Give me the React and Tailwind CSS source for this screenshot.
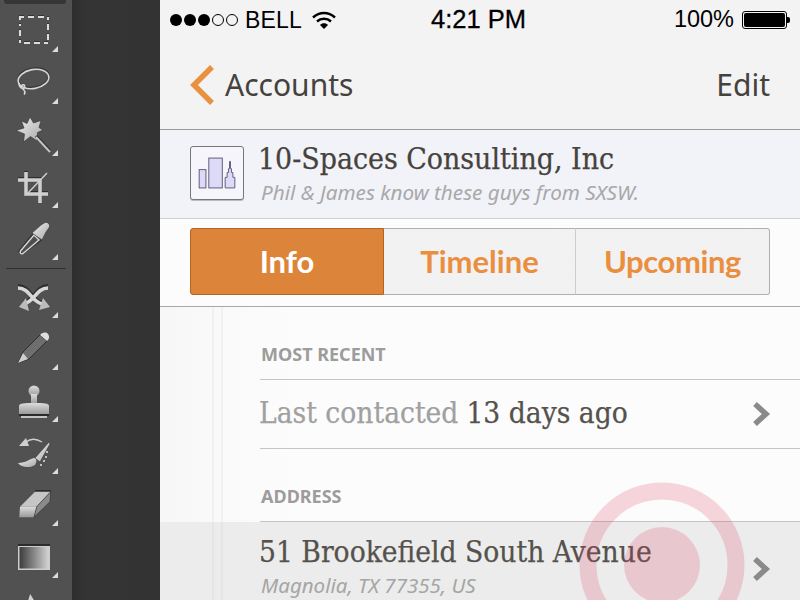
import React from 'react';

const sans = "font-['Liberation_Sans',Arial,sans-serif]";
const slab = "font-['DejaVu_Serif',serif] [font-stretch:condensed] [-webkit-text-stroke:0.25px_currentColor]";
const pt = "font-['Noto_Sans',sans-serif]";
const ptBold = "font-['Lato',sans-serif]";

function Corner() {
  return (
    <svg className="absolute right-[14px] bottom-0" width="6" height="6" viewBox="0 0 6 6">
      <polygon points="6,0 6,6 0,6" fill="#dcdcdc" />
    </svg>
  );
}

function Icon({ children }) {
  return (
    <svg width="36" height="36" viewBox="0 0 36 36" fill="none" className="overflow-visible">
      {children}
    </svg>
  );
}

function Marquee() {
  const d = 'M4 8V5H8M12 5H18M22 5H28M32 5V8M32 12V18M32 22V28M32 31H28M24 31H18M14 31H8M4 31V28M4 24V18M4 14V12';
  return (
    <Icon>
      <path d={d} stroke="#333" strokeWidth="2" transform="translate(0 -1)" />
      <path d={d} stroke="#dcdcdc" strokeWidth="2" />
    </Icon>
  );
}

function Lasso() {
  return (
    <Icon>
      <ellipse cx="17.5" cy="14" rx="15.5" ry="9.5" transform="rotate(-10 17.5 14)" stroke="#333" strokeWidth="2" />
      <ellipse cx="17.5" cy="15" rx="15.5" ry="9.5" transform="rotate(-10 17.5 15)" stroke="#d6d6d6" strokeWidth="1.6" />
      <path d="M3 19C3 25 10 26 8.5 21.5C7 19 3 23 7 25C9 27 9.5 29 8 30.5" stroke="#d6d6d6" strokeWidth="1.6" />
    </Icon>
  );
}

function Wand() {
  return (
    <Icon>
      <path d="M14 1L17.5 7L25 4.5L23 11.5L27 14L21.5 16.5L21 25L14.5 20.5L7.5 26L8.5 18L0 14.5L8 12L5.5 5L11 7.5Z" fill="url(#tool)" stroke="#333" strokeWidth="0.6" />
      <path d="M20 20L34 35" stroke="#333" strokeWidth="3" />
      <path d="M20 21L34 36" stroke="#c4c4c4" strokeWidth="2" />
    </Icon>
  );
}

function Crop() {
  return (
    <Icon>
      <path d="M2 12H24V35M10 4V26H32" stroke="#2e2e2e" strokeWidth="4" transform="translate(0 -1)" />
      <path d="M2 12H24V35M10 4V26H32" stroke="#cfcfcf" strokeWidth="3.6" />
      <path d="M12 25L31 5" stroke="#cfcfcf" strokeWidth="1.4" />
    </Icon>
  );
}

function Dropper() {
  return (
    <Icon>
      <path d="M6 33L4 31L18 14L24 20Z" stroke="#333" strokeWidth="3" />
      <path d="M7 33.5C5 34.5 3.5 33 4.5 31L18 15L23 20Z" fill="#4e4e4e" stroke="#d8d8d8" strokeWidth="1.4" />
      <path d="M16 13L20 9.5L25 5L29 2.5C32 2 34 4 33.5 7L30 12L26 20Z" fill="url(#tool)" stroke="#333" strokeWidth="0.6" />
    </Icon>
  );
}

function Shuffle() {
  return (
    <Icon>
      <path d="M2 8C14 8 16 24 27 25M32 8C20 8 18 24 7 25" stroke="#2e2e2e" strokeWidth="4" />
      <path d="M2 10C14 10 16 25 27 26M32 10C20 10 18 25 7 26" stroke="#d8d8d8" strokeWidth="3.6" />
      <path d="M3 29L10 20L13 33Z" fill="#bcbcbc" />
      <path d="M34 29L23 32L27 20Z" fill="#bcbcbc" />
    </Icon>
  );
}

function Pencil() {
  return (
    <Icon>
      <path d="M2 33L7 22L24 5L31 11L13 29Z" fill="#6e6e6e" stroke="#2e2e2e" strokeWidth="1" />
      <path d="M2 33L7 23L12 29Z" fill="#cfcfcf" />
      <path d="M24 5C27 2 30 2 32 4C34 7 33 9 31 11Z" fill="#dedede" />
    </Icon>
  );
}

function Stamp() {
  return (
    <Icon>
      <circle cx="18" cy="9" r="5.5" fill="url(#toolv)" />
      <path d="M15 12H21V22H15Z" fill="url(#toolv)" />
      <path d="M3 24C3 22 5 21 15 21H21C31 21 33 22 33 24V32H3Z" fill="url(#toolv)" />
      <rect x="5" y="34" width="26" height="2" fill="#c4c4c4" />
      <rect x="3" y="32" width="30" height="2" fill="#2a2a2a" />
    </Icon>
  );
}

function Healing() {
  return (
    <Icon>
      <path d="M3 12L10 4L13 12Z" fill="#d0d0d0" />
      <path d="M10 8C15 4 21 5 26 8" stroke="#d0d0d0" strokeWidth="1.4" />
      <path d="M19 24L33 8L34 10L24 28Z" fill="url(#tool)" stroke="#333" strokeWidth="0.6" />
      <path d="M2 29C10 29 13 25 18 24C21 24 21 28 19 31C15 34 5 34 2 29Z" fill="url(#tool)" />
      <path d="M31 17V19M30 22V24M28 26V28M25 30V32" stroke="#e4e4e4" strokeWidth="1.5" />
    </Icon>
  );
}

function Eraser() {
  return (
    <Icon>
      <path d="M19 5H35" stroke="#2c2c2c" strokeWidth="2" />
      <polygon points="4,20.7 19,5.7 34.7,5.7 20.7,20.7" fill="#c6c6c6" />
      <polygon points="4,20.7 20.7,20.7 18,31.3 3.3,31.3" fill="url(#toolv)" />
      <polygon points="34.7,5.7 34,15.7 18,31.3 20.7,20.7" fill="#8a8a8a" stroke="#2c2c2c" strokeWidth="0.6" />
    </Icon>
  );
}

function Gradient() {
  return (
    <Icon>
      <rect x="2" y="6" width="32" height="26" fill="#cdcdcd" />
      <rect x="2" y="6" width="32" height="2" fill="#2c2c2c" />
      <rect x="3.5" y="9" width="29" height="21.5" fill="url(#ramp)" />
    </Icon>
  );
}

function ArrowTool() {
  return (
    <Icon>
      <path d="M14 3L22 16H10Z" fill="#d0d0d0" stroke="#333" strokeWidth="0.6" />
    </Icon>
  );
}

const groupOne = [Marquee, Lasso, Wand, Crop, Dropper];
const groupTwo = [Pencil, Stamp, Healing, Eraser, Gradient];

function Tool({ icon: I, className = 'h-[52px] pt-3', corner = true }) {
  return (
    <div className={`relative shrink-0 pl-4 ${className}`}>
      <I />
      {corner && <Corner />}
    </div>
  );
}

function Toolbar() {
  return (
    <div className="relative flex h-[600px] w-[72px] shrink-0 flex-col overflow-hidden bg-[#515151]">
      <svg width="0" height="0" className="absolute">
        <defs>
          <linearGradient id="tool" x1="0" y1="0" x2="1" y2="1">
            <stop offset="0" stopColor="#eeeeee" />
            <stop offset="1" stopColor="#a8a8a8" />
          </linearGradient>
          <linearGradient id="toolv" x1="0" y1="0" x2="0" y2="1">
            <stop offset="0" stopColor="#dcdcdc" />
            <stop offset="1" stopColor="#9a9a9a" />
          </linearGradient>
          <linearGradient id="ramp" x1="0" y1="0" x2="1" y2="0">
            <stop offset="0" stopColor="#3c3c3c" />
            <stop offset="1" stopColor="#d2d2d2" />
          </linearGradient>
        </defs>
      </svg>
      <div className="absolute top-0 left-[4px] h-[4px] w-[62px] rounded-b-[3px] bg-[#363636]" />
      {groupOne.map((I, i) => (
        <Tool key={i} icon={I} />
      ))}
      <div className="mx-[6px] mt-[8px] h-[1px] shrink-0 bg-[#2f2f2f]" />
      <Tool icon={Shuffle} className="h-[49px] pt-[9px]" />
      {groupTwo.map((I, i) => (
        <Tool key={i} icon={I} />
      ))}
      <Tool icon={ArrowTool} corner={false} />
    </div>
  );
}

function StatusBar() {
  return (
    <div className={`flex h-10 items-center bg-[#f3f3f3] pr-[10px] pl-[10px] text-[23px] leading-none text-black ${sans}`}>
      <div className="flex w-[261px] shrink-0 items-center">
        <div className="flex gap-[2px]">
          <span className="h-3 w-3 rounded-full bg-black" />
          <span className="h-3 w-3 rounded-full bg-black" />
          <span className="h-3 w-3 rounded-full bg-black" />
          <span className="h-3 w-3 rounded-full border border-black" />
          <span className="h-3 w-3 rounded-full border border-black" />
        </div>
        <span className="ml-[7px] tracking-[0.2px]">BELL</span>
        <svg className="ml-[10px]" width="24" height="18" viewBox="0 0 24 18" fill="none">
          <path d="M1 6.5C7.5 .5 16.5 .5 23 6.5" stroke="#000" strokeWidth="2.4" />
          <path d="M5 10.5C9 6.8 15 6.8 19 10.5" stroke="#000" strokeWidth="2.4" />
          <path d="M8 14L12 18L16 14C14 11.8 10 11.8 8 14Z" fill="#000" />
        </svg>
      </div>
      <span className="text-[25.5px] [-webkit-text-stroke:0.3px_#000]">4:21 PM</span>
      <div className="ml-auto flex items-center">
        <span className="text-[23.5px]">100%</span>
        <div className="ml-[8px] h-[18px] w-[45px] rounded-[3px] border border-black p-[1px]">
          <div className="h-full rounded-[2px] bg-black" />
        </div>
        <div className="h-[6px] w-[3px] rounded-r-[2px] bg-black" />
      </div>
    </div>
  );
}

function NavBar() {
  return (
    <div className={`flex h-[90px] items-center border-b border-[#9a9a9a] bg-[#f3f3f3] pr-[30px] pl-[30px] text-[30px] leading-none text-[#45423e] ${pt}`}>
      <svg width="25" height="42" viewBox="0 0 25 42" fill="none">
        <path d="M22 3L4 21L22 39" stroke="#e8913e" strokeWidth="5.5" />
      </svg>
      <span className="ml-[10px]">Accounts</span>
      <span className="ml-auto">Edit</span>
    </div>
  );
}

function BuildingIcon() {
  return (
    <div className="flex h-[54px] w-[54px] shrink-0 items-center justify-center rounded-[3px] border border-[#777] bg-[#f5f5fb] shadow-[0_1px_0_#bbb]">
      <svg width="54" height="54" viewBox="0 0 54 54" fill="none">
        <rect x="8.5" y="23.5" width="7" height="19" fill="#dddaf8" stroke="#5b5b78" />
        <rect x="18.5" y="11.5" width="14" height="31" fill="#dddaf8" stroke="#5b5b78" />
        <path d="M35.5 42.5V31.5H37.5V26.5H39V22.5H40V15H41V22.5H42V26.5H43.5V31.5H45.5V42.5Z" fill="#dddaf8" stroke="#5b5b78" />
      </svg>
    </div>
  );
}

function Header() {
  return (
    <div className="flex h-[89px] items-start border-b border-[#cfcfcf] bg-[#f2f2f9] pt-4 pl-[30px]">
      <BuildingIcon />
      <div className="ml-[14px] flex flex-col">
        <span className={`-mt-[2px] text-[29.9px] leading-[30px] text-[#46423c] ${slab}`}>10-Spaces Consulting, Inc</span>
        <span className={`mt-[6px] ml-[3px] text-[20.7px] leading-[24px] text-[#a8a8a8] italic ${pt}`}>Phil &amp; James know these guys from SXSW.</span>
      </div>
    </div>
  );
}

function Tabs() {
  const hatch = 'bg-[#f2f2f2] bg-[repeating-linear-gradient(135deg,#f3f3f3_0,#f3f3f3_1px,#f1f1f1_1px,#f1f1f1_3px)]';
  return (
    <div className="h-[88px] border-b border-[#a8a8a8] bg-[#fcfcfc] px-[30px] pt-[9px]">
      <div className={`flex h-[67px] text-[31px] leading-none font-bold ${ptBold}`}>
        <div className="flex w-[194px] items-center justify-center rounded-l-[3px] border border-[#b5651f] bg-[#dc853a] text-white">Info</div>
        <div className={`flex w-[192px] items-center justify-center border-y border-r border-y-[#b0b0b0] border-r-[#cccccc] text-[#ea8f3f] ${hatch}`}>Timeline</div>
        <div className={`flex w-[194px] items-center justify-center rounded-r-[3px] border-y border-r border-[#b0b0b0] tracking-[-0.4px] text-[#ea8f3f] ${hatch}`}>Upcoming</div>
      </div>
    </div>
  );
}

function Chevron() {
  return (
    <svg className="ml-auto" width="20" height="26" viewBox="0 0 20 26" fill="none">
      <path d="M4 3L15 13L4 23" stroke="#8a8a8a" strokeWidth="5.5" />
    </svg>
  );
}

function Label({ children, className }) {
  return (
    <div className={`ml-[100px] border-b border-[#c4c4c4] pl-[1px] text-[18px] leading-none font-bold text-[#9c9c9c] ${pt} ${className}`}>
      {children}
    </div>
  );
}

function Content() {
  return (
    <div className="relative flex-1 overflow-hidden bg-gradient-to-r from-[#f7f7f7] via-[#fcfcfc] via-20% to-[#fcfcfc]">
      <Label className="h-[73px] pt-[38px]">MOST RECENT</Label>
      <div className={`ml-[100px] flex h-[69px] items-center border-b border-[#c4c4c4] pr-[29px] text-[29.6px] leading-none ${slab}`}>
        <span className="-ml-[1px] text-[#a0a0a0]">Last contacted</span>
        <span className="ml-[8px] text-[#55514c]">13 days ago</span>
        <Chevron />
      </div>
      <Label className="h-[73px] pt-[38px]">ADDRESS</Label>
      <div className="h-[78px] bg-[#ececec] pt-[13px] pr-[29px] pl-[100px]">
        <div className="flex items-center">
          <div className="flex flex-col">
            <span className={`-ml-[1px] text-[29.6px] leading-[34px] text-[#55514c] ${slab}`}>51 Brookefield South Avenue</span>
            <span className={`mt-[4px] ml-[1px] text-[20.5px] leading-[24px] text-[#a5a5a5] italic ${pt}`}>Magnolia, TX 77355, US</span>
          </div>
          <div className="mt-[5px] ml-auto flex">
            <Chevron />
          </div>
        </div>
      </div>
      <div className="absolute top-0 bottom-0 left-[52px] w-[2px] bg-[#6b6b6b]/5" />
      <div className="absolute top-0 bottom-0 left-[61px] w-[2px] bg-[#6b6b6b]/5" />
      <svg className="absolute top-[170px] left-[414px]" width="176" height="176" viewBox="0 0 176 176" fill="none">
        <circle cx="88" cy="88" r="74" stroke="#dc3c5a" strokeOpacity="0.2" strokeWidth="17" />
        <circle cx="88" cy="88" r="38" fill="#dc3c5a" fillOpacity="0.2" />
      </svg>
    </div>
  );
}

export default function App() {
  return (
    <div className="flex h-[600px] w-[800px] overflow-hidden bg-[#333]">
      <Toolbar />
      <div className="w-[88px] shrink-0 bg-gradient-to-r from-[#2e2e2e] via-[#343434] via-15% to-[#333]" />
      <div className="flex w-[640px] flex-col">
        <StatusBar />
        <NavBar />
        <Header />
        <Tabs />
        <Content />
      </div>
    </div>
  );
}
